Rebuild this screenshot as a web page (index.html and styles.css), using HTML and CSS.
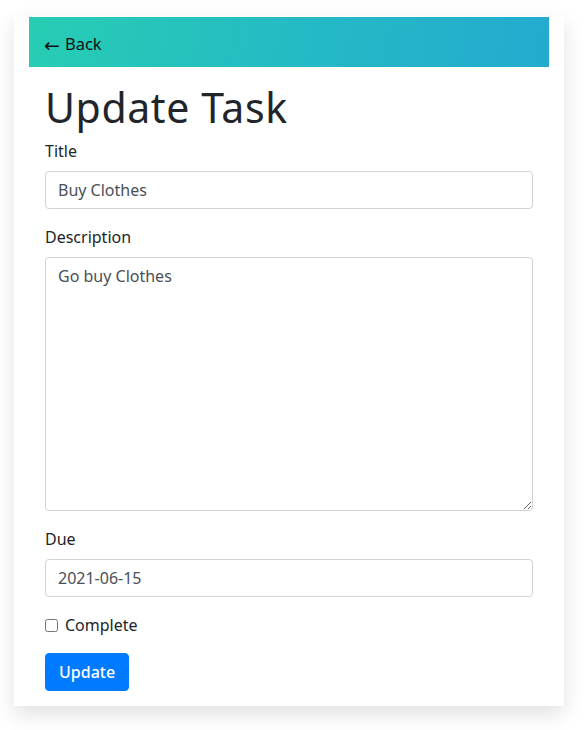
FILE: index.html
```html
<!DOCTYPE html>
<html>
<head>
<meta charset="utf-8">
<link rel="stylesheet" href="styles.css">
</head>
<body>
<div class="card">
  <div class="topbar">
    <a class="back" href="#"><span class="arrow">&larr;</span>Back</a>
  </div>
  <div class="content">
    <h1 class="title">Update Task</h1>
    <form class="form">
      <div class="group">
        <label class="label">Title</label>
        <input class="control" type="text" value="Buy Clothes">
      </div>
      <div class="group">
        <label class="label">Description</label>
        <textarea class="control area">Go buy Clothes</textarea>
      </div>
      <div class="group">
        <label class="label">Due</label>
        <input class="control" type="text" value="2021-06-15">
      </div>
      <div class="group check">
        <input class="box" type="checkbox" id="c">
        <label class="check-label" for="c">Complete</label>
      </div>
      <button class="btn" type="button">Update</button>
    </form>
  </div>
</div>
</body>
</html>
```

FILE: styles.css
```css
* { box-sizing: border-box; }
html, body { margin: 0; padding: 0; background: #fff; }
body {
  font-family: "Noto Sans", "DejaVu Sans", sans-serif;
  color: #212529;
  font-size: 16px;
  line-height: 1.5;
  padding: 16px 21px 24px 14px;
}
.card {
  width: 550px;
  background: #fff;
  padding: 1px 15px 15px;
  box-shadow: 0 8px 20px rgba(0,0,0,0.12);
}
.topbar {
  height: 50px;
  background: linear-gradient(100deg, #27cdb3 0%, #25b9c6 55%, #23abcf 100%);
  display: flex;
  align-items: center;
  padding: 0 16px 0 15px;
}
.back {
  color: #111;
  text-decoration: none;
  font-size: 16.5px;
  padding-top: 4px;
  display: flex;
  align-items: center;
}
.arrow { font-size: 19px; margin-right: 5px; line-height: 1; padding-top: 2px; }
.content { padding: 0 16px; }
.title {
  font-size: 41px;
  font-weight: 400;
  letter-spacing: 0.6px;
  line-height: 48px;
  margin: 16px 0 8px;
  color: #212529;
}
.form { margin: 0; }
.group { margin-bottom: 16px; display: flex; flex-direction: column; }
.label { display: block; margin-bottom: 8px; line-height: 24px; }
.control {
  display: block;
  width: 100%;
  height: 38px;
  padding: 6px 12px;
  font-family: inherit;
  font-size: 16px;
  line-height: 24px;
  color: #495057;
  background: #fff;
  border: 1px solid #ced4da;
  border-radius: 4px;
  margin: 0;
}
.area { height: 254px; resize: vertical; }
.check { flex-direction: row; align-items: center; height: 24px; }
.box { margin: 0 7px 0 0; width: 13px; height: 13px; }
.check-label { line-height: 24px; }
.btn {
  display: block;
  height: 38px;
  padding: 6px 13px;
  font-family: inherit;
  font-size: 16px;
  font-weight: 500;
  line-height: 24px;
  color: #fff;
  background: #007bff;
  border: 1px solid #007bff;
  border-radius: 4px;
}
```
